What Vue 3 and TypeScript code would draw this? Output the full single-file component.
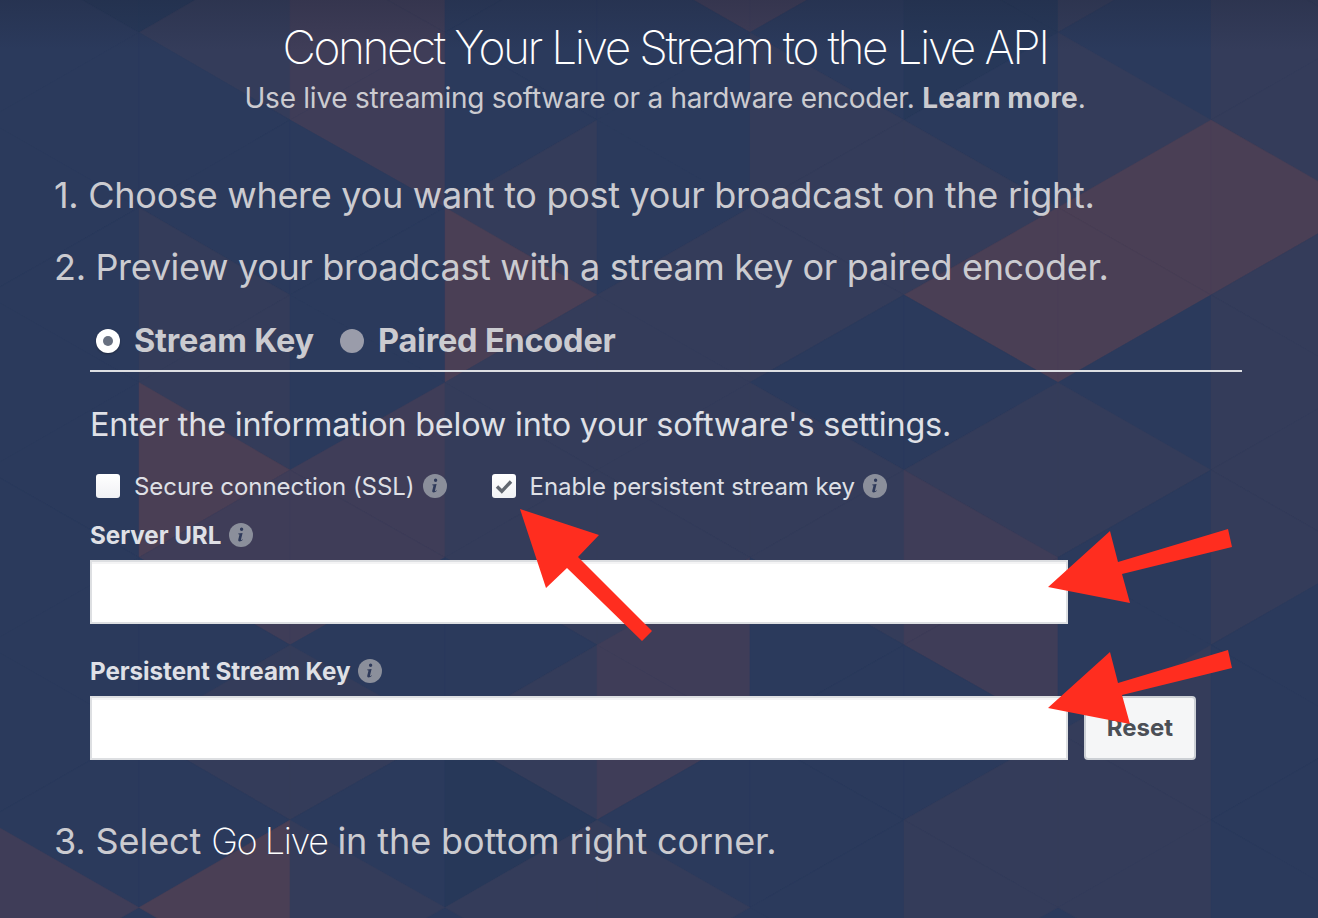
<script setup lang="ts">
const X = [-14, 139, 290, 445, 597, 750, 904, 1058, 1211, 1364]
const shades: Record<string, string> = {
  D: '#273859', B: '#2b3a5c', M: '#343c5a', P: '#3f3d58', R: '#4a3f55',
}
const rows = [
  'DDPBPPDMM',
  'BMPBBBDBM',
  'BBPBBMBMM',
  'BBBMBMMRR',
  'BMBRMMRRM',
  'BMBMMBBBM',
  'BRPMMMMMM',
  'BPPMMMPBM',
  'BBBBPBPBB',
  'BMMMPBBMB',
  'BBBDBBMMB',
  'PRMMMBMMB',
]
const yOf = (j: number) => 32.5 + 87.5 * j
const triangles = rows.flatMap((row, r) =>
  row.split('').map((s, c) => {
    const j = r - 1
    const even = (c + j) % 2 === 0
    const pts = even
      ? [[X[c], yOf(j - 1)], [X[c], yOf(j + 1)], [X[c + 1], yOf(j)]]
      : [[X[c], yOf(j)], [X[c + 1], yOf(j - 1)], [X[c + 1], yOf(j + 1)]]
    return { key: `${r}-${c}`, fill: shades[s], points: pts.map((p) => p.join(',')).join(' ') }
  }),
)
const infoPath =
  'M12.6 4.6a1.7 1.7 0 1 1 0 3.4 1.7 1.7 0 0 1 0-3.4zM9.2 10.6l4.4-.6-1.6 6.6c-.1.5.3.6.7.3l.8-.6.3.5c-1 1-2 1.7-3.2 1.7-1.1 0-1.6-.7-1.3-2l1.1-4.4c.1-.5-.1-.8-.8-.8l-.4-.1z'
const arrows = [
  '520,509 599,535 578,557 652,631 642,641 567,568 546,588',
  '1048,587 1110,531 1118,562 1228,529 1232,547 1122,574 1130,603',
  '1048,708 1110,652 1118,683 1228,650 1232,668 1122,695 1130,724',
]
</script>

<template>
  <div class="page">
    <svg class="bg" width="1318" height="918" viewBox="0 0 1318 918" aria-hidden="true">
      <defs>
        <linearGradient id="topShade" x1="0" y1="0" x2="0" y2="1">
          <stop offset="0" stop-color="#1c2236" stop-opacity="0.28" />
          <stop offset="1" stop-color="#1c2236" stop-opacity="0" />
        </linearGradient>
      </defs>
      <polygon v-for="t in triangles" :key="t.key" :points="t.points" :fill="t.fill" :stroke="t.fill" stroke-width="0.5" />
      <rect x="0" y="0" width="1318" height="50" fill="url(#topShade)" />
    </svg>

    <main class="content">
      <header class="head">
        <h1>Connect Your Live Stream to the Live API</h1>
        <p>Use live streaming software or a hardware encoder. <b>Learn more</b>.</p>
      </header>

      <p class="step first">1. Choose where you want to post your broadcast on the right.</p>
      <p class="step second">2. Preview your broadcast with a stream key or paired encoder.</p>

      <section class="panel">
        <div class="tabs">
          <span class="radio on"><i></i></span>
          <span class="tab">Stream Key</span>
          <span class="radio off"></span>
          <span class="tab">Paired Encoder</span>
        </div>

        <p class="enter">Enter the information below into your software's settings.</p>

        <div class="checks">
          <span class="box"></span>
          <span class="check-label">Secure connection (SSL)</span>
          <svg class="info" viewBox="0 0 24 24"><circle cx="12" cy="12" r="12" fill="#8b8f9b" /><path :d="infoPath" fill="#2f3a5a" /></svg>
          <span class="box second-box">
            <svg viewBox="0 0 24 24" width="24" height="24"><path d="M5 12.5l4.8 4.8L19 7.5" fill="none" stroke="#616770" stroke-width="3.4" /></svg>
          </span>
          <span class="check-label">Enable persistent stream key</span>
          <svg class="info" viewBox="0 0 24 24"><circle cx="12" cy="12" r="12" fill="#8b8f9b" /><path :d="infoPath" fill="#2f3a5a" /></svg>
        </div>

        <div class="label server">
          <span>Server URL</span>
          <svg class="info" viewBox="0 0 24 24"><circle cx="12" cy="12" r="12" fill="#8b8f9b" /><path :d="infoPath" fill="#2f3a5a" /></svg>
        </div>
        <div class="field"></div>

        <div class="label key">
          <span>Persistent Stream Key</span>
          <svg class="info" viewBox="0 0 24 24"><circle cx="12" cy="12" r="12" fill="#8b8f9b" /><path :d="infoPath" fill="#2f3a5a" /></svg>
        </div>
        <div class="field-row">
          <div class="field"></div>
          <button class="reset" type="button">Reset</button>
        </div>
      </section>

      <p class="step third">3. Select <span class="thin">Go Live</span> in the bottom right corner.</p>
    </main>

    <svg class="arrows" width="1318" height="918" viewBox="0 0 1318 918" aria-hidden="true">
      <polygon v-for="a in arrows" :key="a" :points="a" fill="#ff2d1f" />
    </svg>
  </div>
</template>

<style>
html, body { margin: 0; background: #2b3a5c; }
</style>

<style scoped>
.page {
  position: relative;
  width: 1318px;
  height: 918px;
  overflow: hidden;
  font-family: Inter, Roboto, "Liberation Sans", sans-serif;
  color: #cbcbd0;
}
.bg, .arrows { position: absolute; left: 0; top: 0; }
.arrows { pointer-events: none; }
.content { position: relative; display: flex; flex-direction: column; padding-left: 54px; }
.head { width: 1330px; margin-left: -54px; text-align: center; }
h1 {
  margin: 20px 0 0;
  font-size: 46px;
  line-height: 54px;
  font-weight: 150;
  letter-spacing: -2.43px;
  color: #fff;
}
.head p { margin: 7px 0 0; font-size: 28px; line-height: 34px; font-weight: 400; letter-spacing: -0.25px; }
.head b { font-weight: 700; letter-spacing: 0.05px; }
.step { margin: 0; font-size: 36px; line-height: 42px; font-weight: 400; letter-spacing: -0.33px; }
.first { margin-top: 59px; letter-spacing: -0.28px; }
.second { margin-top: 30px; }
.third { margin-top: 60px; letter-spacing: -0.1px; }
.thin { font-weight: 200; color: #fff; letter-spacing: -1.4px; }
.panel { margin-left: 36px; margin-top: 21px; width: 1152px; }
.tabs {
  display: flex;
  align-items: center;
  height: 63px;
  padding: 2px 0 0 6px;
  border-bottom: 2px solid #dddfe3;
  box-sizing: border-box;
}
.radio {
  width: 24px;
  height: 24px;
  border-radius: 50%;
  display: flex;
  align-items: center;
  justify-content: center;
  flex: none;
}
.radio.on { background: #fff; box-shadow: 0 1px 2px rgba(0, 0, 0, .3); }
.radio.on i { width: 10px; height: 10px; border-radius: 50%; background: #687080; }
.radio.off { background: #9a9caa; margin-left: 26px; }
.tab { font-size: 32.5px; font-weight: 700; margin-left: 14px; letter-spacing: -0.2px; color: #cbcbd0; }
.enter { margin: 33px 0 0; font-size: 32.4px; line-height: 40px; letter-spacing: -0.2px; color: #dfe0e6; }
.checks { display: flex; align-items: center; height: 24px; margin-top: 29px; padding-left: 6px; }
.box {
  width: 24px;
  height: 24px;
  border-radius: 3px;
  background: linear-gradient(#fff, #f0f1f4);
  flex: none;
}
.second-box { margin-left: 45px; }
.check-label { font-size: 24px; margin-left: 14px; letter-spacing: -0.05px; color: #dfe0e6; }
.info { width: 24px; height: 24px; margin-left: 8px; flex: none; }
.label { display: flex; align-items: center; height: 24px; font-size: 24.2px; font-weight: 700; letter-spacing: -0.05px; color: #dfe0e6; }
.server { margin-top: 25px; }
.key { margin-top: 35px; }
.field {
  height: 64px;
  width: 978px;
  margin-top: 13px;
  box-sizing: border-box;
  background: #fff;
  border: 2px solid #dddfe2;
  box-shadow: inset 0 2px 0 #f4f4f5;
  flex: none;
}
.field-row { display: flex; gap: 16px; align-items: flex-end; }
.reset {
  width: 112px;
  height: 64px;
  box-sizing: border-box;
  background: #f5f6f7;
  border: 2px solid #ccd0d5;
  border-radius: 4px;
  color: #4b4f56;
  font-family: inherit;
  font-size: 24px;
  font-weight: 700;
  padding: 0 0 2px;
}
</style>
